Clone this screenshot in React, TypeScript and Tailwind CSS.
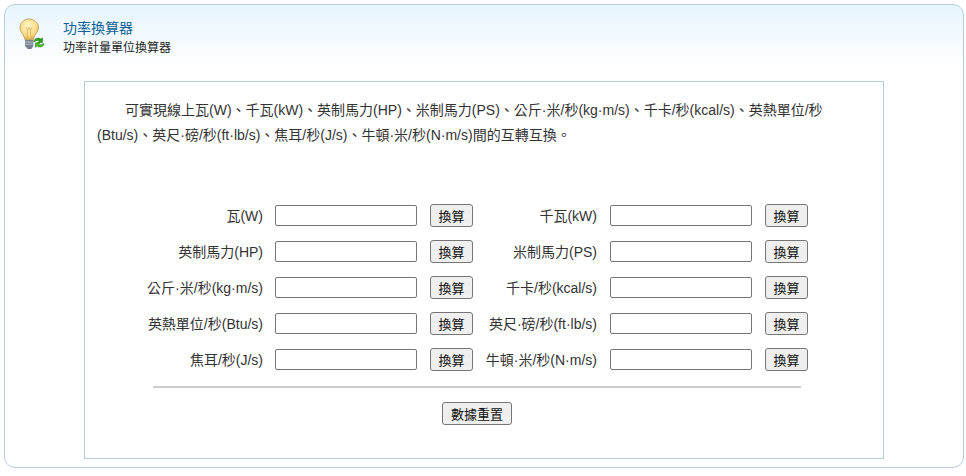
import React from 'react';

const UNITS: [string, string][] = [
  ['瓦(W)', '千瓦(kW)'],
  ['英制馬力(HP)', '米制馬力(PS)'],
  ['公斤·米/秒(kg·m/s)', '千卡/秒(kcal/s)'],
  ['英熱單位/秒(Btu/s)', '英尺·磅/秒(ft·lb/s)'],
  ['焦耳/秒(J/s)', '牛頓·米/秒(N·m/s)'],
];

const btn =
  'h-[23px] pt-[2px] rounded-[3px] border border-[#767676] bg-[#efefef] text-[13px] leading-none text-[#111] flex items-center justify-center';

const BulbIcon = () => (
  <svg width="32" height="34" viewBox="0 0 32 34" className="shrink-0">
    <defs>
      <radialGradient id="bulb" cx="45%" cy="35%" r="65%">
        <stop offset="0%" stopColor="#fff6c8" />
        <stop offset="70%" stopColor="#f9dd86" />
        <stop offset="100%" stopColor="#e0b050" />
      </radialGradient>
    </defs>
    <path
      d="M10 1C5 1 1 4.900 1 9.600c0 3.400 1.800 5.300 3.200 7.400 1 1.500 1.500 3 1.600 4.500h8.600c.1-1.500.6-3 1.600-4.500 1.400-2.100 3.500-4 3.500-7.400C19.500 4.900 15 1 10 1z"
      fill="url(#bulb)"
      stroke="#c9a765"
      strokeWidth="1"
    />
    <path d="M7 9l1.500 3L10 9.500 11.500 12 13 9M8.500 12L8 21M11.500 12l.5 9" fill="none" stroke="#d6a24e" strokeWidth="0.7" />
    <path d="M6 22h8.500v5.500L12.500 31h-4L6 27.500z" fill="#76828f" />
    <path d="M6 24h8.500M6 26.200h8.500" stroke="#c8ced6" strokeWidth="0.8" />
    <path d="M14.800 23.500c.6-2.800 4.400-4.600 7.200-2.400l1.500-1.300v4.700h-4.700l1.500-1.500c-1.600-1-3.300-.7-4.200.5z" fill="#2f9e1f" stroke="#1f7a12" strokeWidth="0.5" />
    <path d="M25.200 25.700c-.6 2.800-4.400 4.500-7.200 2.400l-1.500 1.300v-4.700h4.700l-1.500 1.500c1.600 1 3.300.7 4.200-.5z" fill="#55b82f" stroke="#1f7a12" strokeWidth="0.5" />
  </svg>
);

export default function App() {
  return (
    <div className="w-[966px] h-[476px] bg-white pt-1 pl-1 text-[14px] text-[#333] font-['Liberation_Sans','Noto_Sans_CJK_TC',sans-serif]">
      <div className="w-[960px] h-[464px] rounded-[11px] border border-[#b5cddd] bg-[linear-gradient(to_bottom,#e6f5fe_0px,#ffffff_62px)] pt-[76px] pl-[79px] relative">
        <div className="absolute left-[14px] top-[13px] flex gap-[13px]">
          <BulbIcon />
          <div className="-ml-[1px]">
            <div className="text-[14px] leading-[20px] text-[#0f5f96] h-[21px]">功率換算器</div>
            <div className="text-[12px] leading-[18px] text-[#222]">功率計量單位換算器</div>
          </div>
        </div>

        <div className="w-[800px] h-[378px] border border-[#b5cddd] bg-white">
          <p className="pl-3 pr-[49px] pt-[16px] h-[122px] leading-[25px] indent-[28px] text-[14px]">
            可實現線上瓦(W)、千瓦(kW)、英制馬力(HP)、米制馬力(PS)、公斤·米/秒(kg·m/s)、千卡/秒(kcal/s)、英熱單位/秒(Btu/s)、英尺·磅/秒(ft·lb/s)、焦耳/秒(J/s)、牛頓·米/秒(N·m/s)間的互轉互換。
          </p>

          <div className="flex flex-col gap-[13px]">
            {UNITS.map(([left, right]) => (
              <div key={left} className="flex items-center h-[23px]">
                <label className="w-[178px] pt-[2px] text-right whitespace-nowrap">{left}</label>
                <input className="ml-3 w-[142px] h-[21px] rounded-[2px] border border-[#767676] bg-white" />
                <button className={`ml-[13px] w-[43px] ${btn}`}>換算</button>
                <label className="w-[124px] pt-[2px] text-right whitespace-nowrap">{right}</label>
                <input className="ml-[13px] w-[142px] h-[21px] rounded-[2px] border border-[#767676] bg-white" />
                <button className={`ml-[13px] w-[43px] ${btn}`}>換算</button>
              </div>
            ))}
          </div>

          <div className="ml-[68px] mt-[15px] w-[648px] h-[2px] bg-[#cccccc]" />
          <div className="flex mt-[14px] ml-[357px]">
            <button className={`w-[70px] ${btn}`}>數據重置</button>
          </div>
        </div>
      </div>
    </div>
  );
}
